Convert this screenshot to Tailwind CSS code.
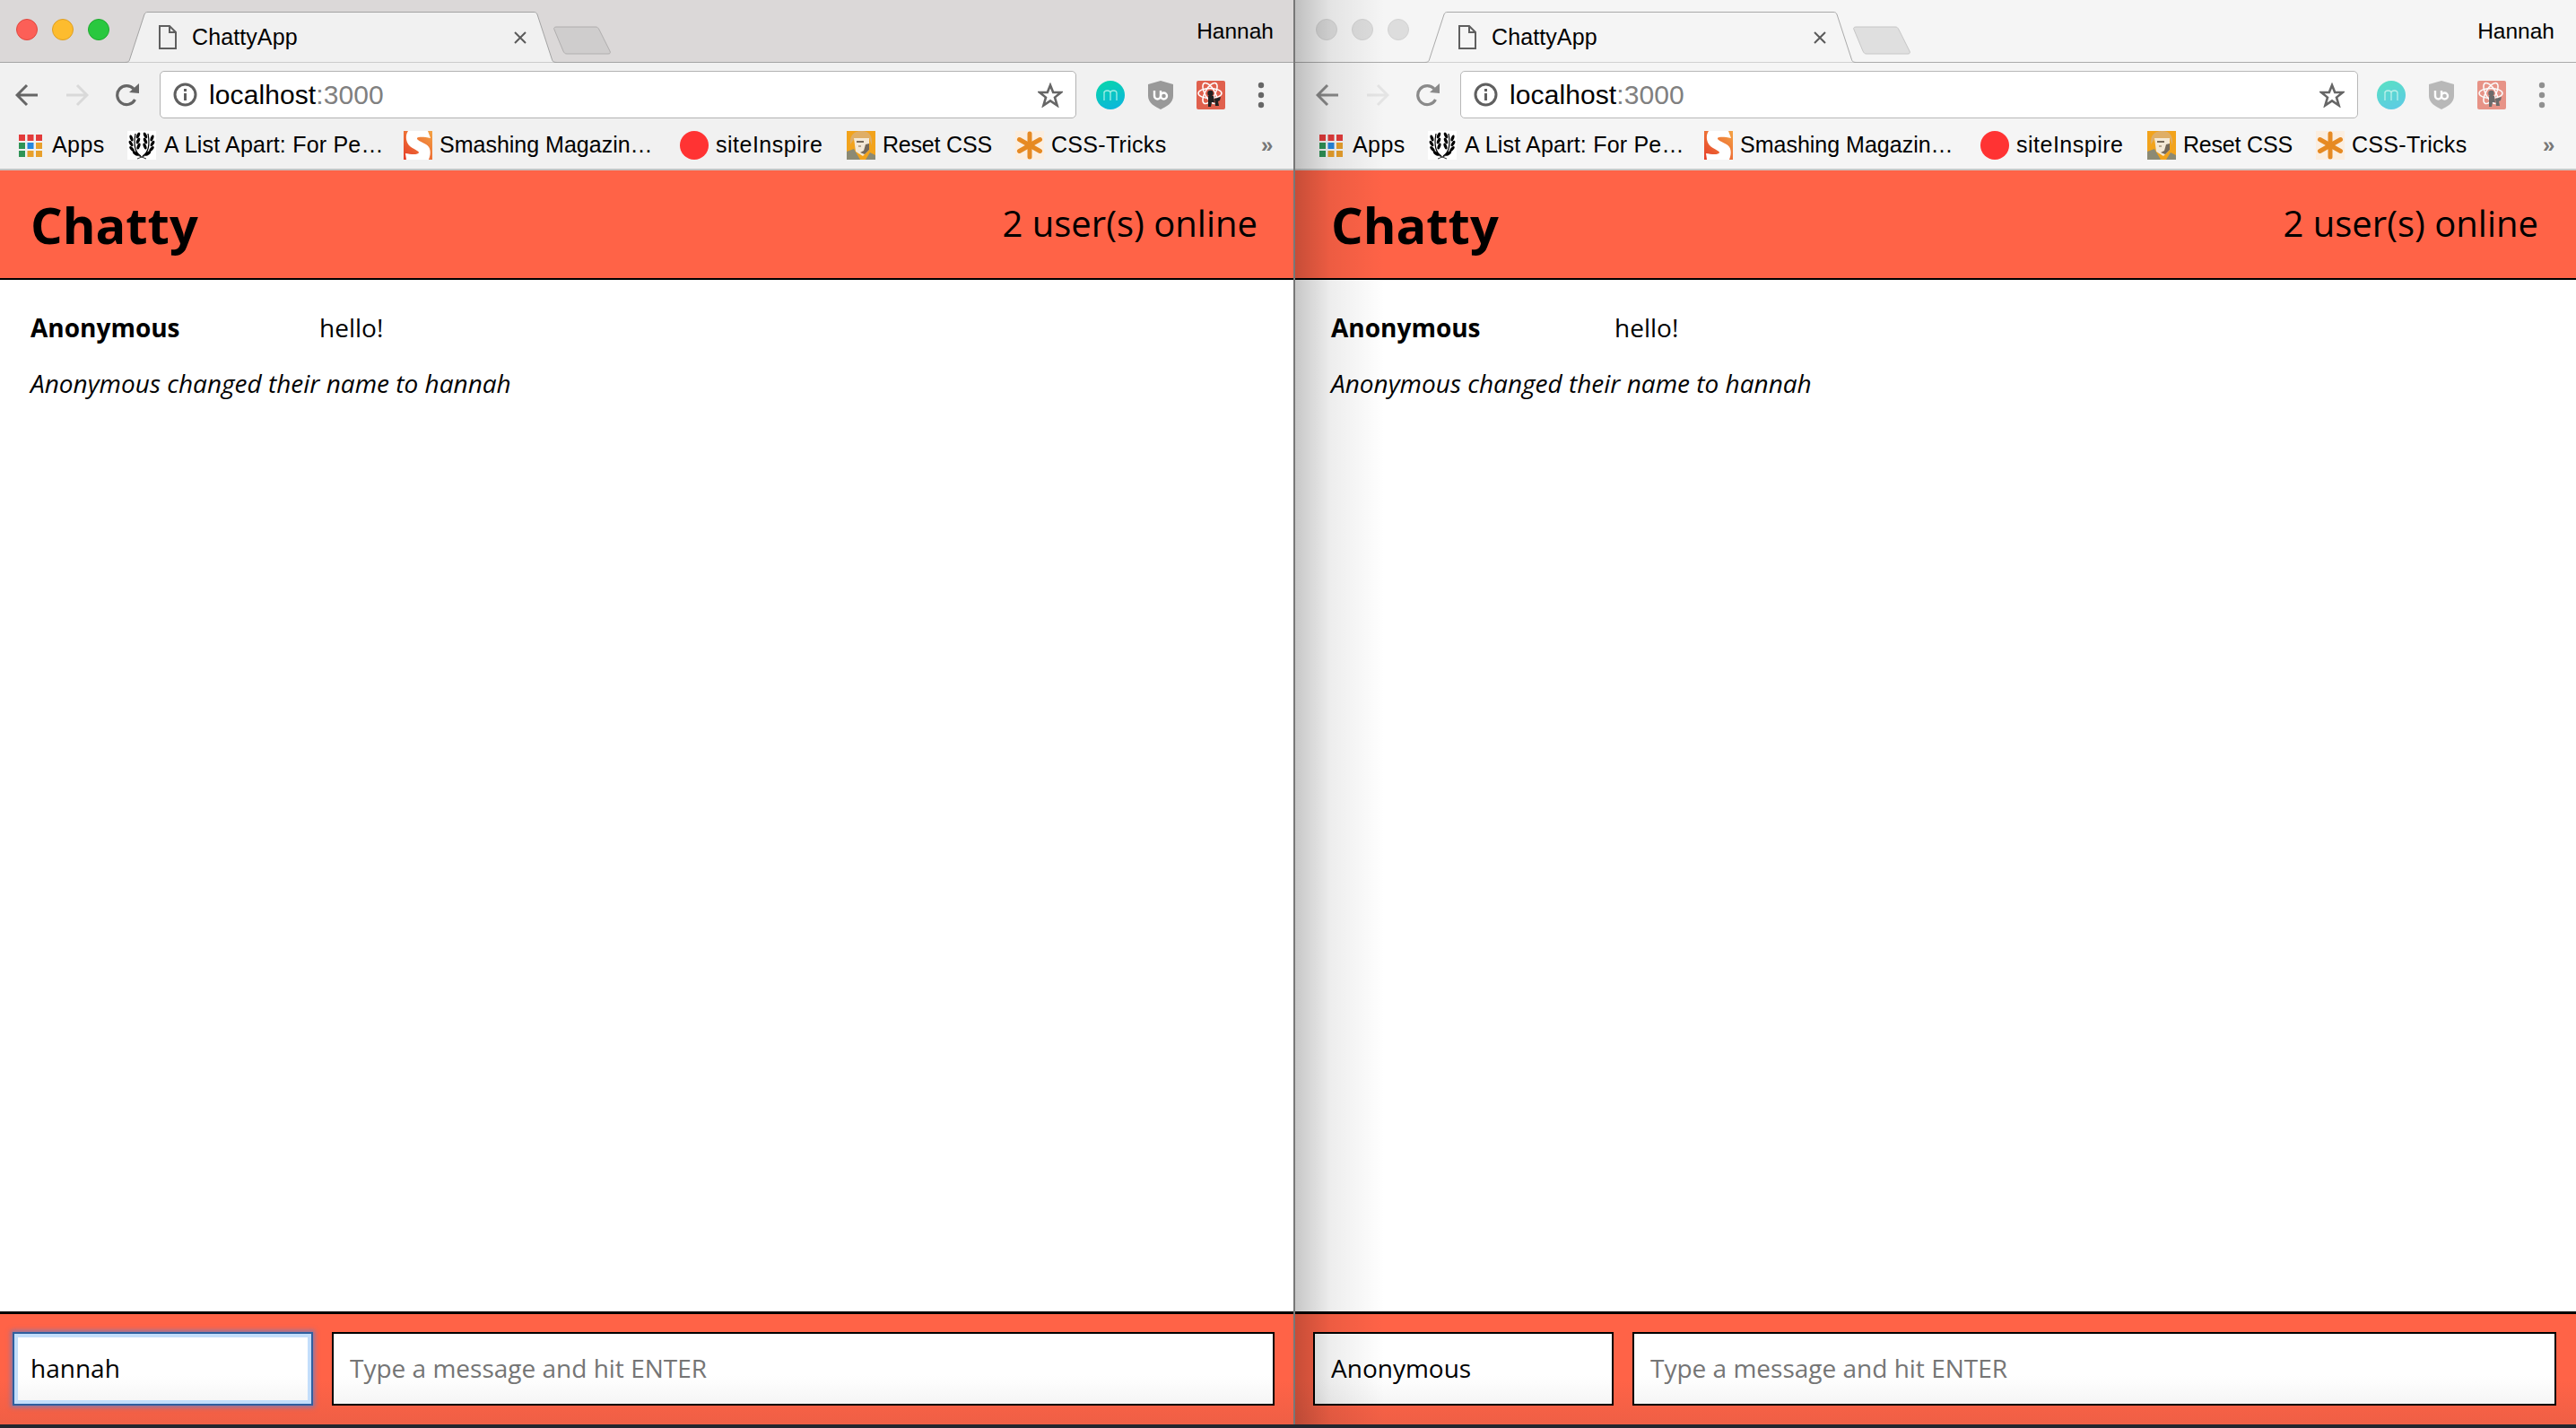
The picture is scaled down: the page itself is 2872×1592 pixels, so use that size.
<!DOCTYPE html>
<html lang="en">
<head>
    <meta charset="UTF-8">
    <title>ChattyApp</title>
    <script src="https://cdn.jsdelivr.net/npm/@tailwindcss/browser@4"></script>
</head>
<body class="w-[2872px] h-[1592px] overflow-hidden bg-[#23262e]">
    <!-- shared toolbar icons -->
    <svg class="absolute w-0 h-0">
        <defs>
            <linearGradient id="smashing" x1="1" y1="0" x2="0" y2="1"><stop offset="0" stop-color="#f4a444"/><stop offset="1" stop-color="#e63c28"/></linearGradient>
            <linearGradient id="mint" x1="0.3" y1="0" x2="0.7" y2="1"><stop offset="0" stop-color="#08d4ad"/><stop offset="1" stop-color="#0cb6dc"/></linearGradient>
        </defs>
        <symbol id="doc" viewBox="0 0 20 27"><path d="M1 1H12L19 8V26H1Z M12 1V8H19" fill="none" stroke="#5f5f5f" stroke-width="2"/></symbol>
        <symbol id="close" viewBox="0 0 14 14"><path d="M1 1L13 13M13 1L1 13" stroke="#5a5a5a" stroke-width="2"/></symbol>
        <symbol id="back" viewBox="0 0 26 26"><path d="M25 13H2M13 2L2 13L13 24" fill="none" stroke="currentColor" stroke-width="3"/></symbol>
        <symbol id="forward" viewBox="0 0 26 26"><path d="M1 13H24M13 2L24 13L13 24" fill="none" stroke="currentColor" stroke-width="3"/></symbol>
        <symbol id="reload" viewBox="0 0 26 26"><path d="M21.5 18A10.5 10.5 0 1 1 20 6" fill="none" stroke="currentColor" stroke-width="3.2"/><path d="M15 10L26 11V0Z" fill="currentColor"/></symbol>
        <symbol id="info" viewBox="0 0 27 27"><circle cx="13.5" cy="13.5" r="11.5" fill="none" stroke="#5f5f5f" stroke-width="3"/><rect x="12" y="12" width="3" height="8" fill="#5f5f5f"/><rect x="12" y="7" width="3" height="3" fill="#5f5f5f"/></symbol>
        <symbol id="star" viewBox="0 0 28 28"><path d="M14 3L17.2 11H26L19 16.6L21.6 25.5L14 20.4L6.4 25.5L9 16.6L2 11H10.8Z" fill="none" stroke="#666" stroke-width="2.6"/></symbol>
        <symbol id="mint-ext" viewBox="0 0 32 32"><circle cx="16" cy="16" r="16" fill="url(#mint)"/><path d="M9 22V12M9 14C9 10 16 10 16 14V22M16 14C16 10 23 10 23 14V22" fill="none" stroke="#9feee6" stroke-width="1.3"/></symbol>
        <symbol id="ublock" viewBox="0 0 28 32"><path d="M14 0L28 4V17C28 25 20 29 14 32C8 29 0 25 0 17V4Z" fill="#999"/><path d="M7 11V17A3.5 3.5 0 0 0 14 17V11M14 17A3.5 3.5 0 1 0 21 17A3.5 3.5 0 1 0 14 17" fill="none" stroke="#fff" stroke-width="2.4"/></symbol>
        <symbol id="react-ext" viewBox="0 0 32 32"><rect width="32" height="32" rx="2" fill="#e0604d"/><g fill="none" stroke="#fff" stroke-width="1.5"><ellipse cx="15" cy="14" rx="13" ry="5.5"/><ellipse cx="15" cy="14" rx="13" ry="5.5" transform="rotate(60 15 14)"/><ellipse cx="15" cy="14" rx="13" ry="5.5" transform="rotate(120 15 14)"/></g><circle cx="15.500" cy="14" r="3.200" fill="#222"/><path d="M13 17H19L20 24H17L16 29H13ZM20 20L27 18L26 22L24 23L25 28L21 28Z" fill="#222"/></symbol>
        <symbol id="dots" viewBox="0 0 16 32"><circle cx="8" cy="5" r="3.2" fill="#666"/><circle cx="8" cy="16" r="3.2" fill="#666"/><circle cx="8" cy="27" r="3.2" fill="#666"/></symbol>
        <symbol id="apps" viewBox="0 0 26 26">
            <rect x="0" y="1" width="7" height="7" fill="#e33b3b"/><rect x="9.500" y="1" width="7" height="7" fill="#e33b3b"/><rect x="19" y="1" width="7" height="7" fill="#e33b3b"/>
            <rect x="0" y="10" width="7" height="7" fill="#2f9457"/><rect x="9.500" y="10" width="7" height="7" fill="#2486e0"/><rect x="19" y="10" width="7" height="7" fill="#e8a02c"/>
            <rect x="0" y="19" width="7" height="7" fill="#2f9457"/><rect x="9.500" y="19" width="7" height="7" fill="#e8a02c"/><rect x="19" y="19" width="7" height="7" fill="#e8a02c"/>
        </symbol>
        <symbol id="laurel-branch" viewBox="0 0 32 32">
            <path d="M15 28C8 24 7 14 9 3" fill="none" stroke="#000" stroke-width="1.2"/>
            <g fill="#000">
                <ellipse cx="4.500" cy="8" rx="1.700" ry="3.600" transform="rotate(-20 4.500 8)"/><ellipse cx="12" cy="5" rx="1.700" ry="3.600" transform="rotate(25 12 5)"/>
                <ellipse cx="4" cy="14" rx="1.700" ry="3.600" transform="rotate(-30 4 14)"/><ellipse cx="12" cy="11" rx="1.700" ry="3.600" transform="rotate(25 12 11)"/>
                <ellipse cx="5" cy="20" rx="1.700" ry="3.600" transform="rotate(-40 5 20)"/><ellipse cx="12.500" cy="17" rx="1.700" ry="3.600" transform="rotate(20 12.500 17)"/>
                <ellipse cx="9" cy="25" rx="1.700" ry="3.600" transform="rotate(-55 9 25)"/>
            </g>
        </symbol>
        <symbol id="laurel" viewBox="0 0 32 32">
            <rect width="32" height="32" fill="#fff"/>
            <use href="#laurel-branch" width="32" height="32"/>
            <use href="#laurel-branch" width="32" height="32" transform="translate(32 0) scale(-1 1)"/>
            <path d="M11 31L21 27M21 31L11 27" stroke="#000" stroke-width="0.800"/>
        </symbol>
        <symbol id="smashing-logo" viewBox="0 0 32 32"><rect width="32" height="32" fill="url(#smashing)"/><path d="M5 0H27L30 8C24 7 17 6 15 8C14 10 20 12 25 15C30 18 31 24 28 32H3L2 25C8 26 16 27 17 24C17 22 10 20 6 16C2 11 2 4 5 0Z" fill="#fff"/></symbol>
        <symbol id="portrait" viewBox="0 0 32 32"><rect width="32" height="32" fill="#f2a31c"/><path d="M4 15C3 3 10 0 17 0C25 0 29 5 28 16L25 8H9Z" fill="#dfae66"/><path d="M8 8H25V21L18 28L10 23Z" fill="#f3e8d6"/><path d="M11 11H19V13H11ZM21 15L25 14V21L20 26L15 24L19 22Z" fill="#75695a"/><path d="M13 16H16V18H13Z" fill="#b9a78d"/><path d="M0 32V23L8 20L15 32ZM32 32V27L26 24L21 32Z" fill="#8b8a74"/></symbol>
        <symbol id="asterisk" viewBox="0 0 32 32"><rect width="32" height="32" fill="#fbeee0"/><g stroke="#e68a23" stroke-width="5" stroke-linecap="round"><path d="M16 3V29"/><path d="M4.500 9.500L27.500 22.500"/><path d="M27.500 9.500L4.500 22.500"/></g></symbol>
    </svg>

    <div class="flex h-[1588px] font-['Open_Sans',sans-serif] text-black">

        <!-- Focused window -->
        <section class="w-[1442px] flex flex-col">
            <div class="h-[70px] flex bg-[#dbd8d8] border-b border-[#a5a5a5] pl-[18px] font-['Liberation_Sans',sans-serif]">
                <div class="flex gap-4 pt-[21px]">
                    <span class="w-6 h-6 rounded-full bg-[#fc5f57] border border-[#e0483f]"></span>
                    <span class="w-6 h-6 rounded-full bg-[#fdbc2e] border border-[#de9f23]"></span>
                    <span class="w-6 h-6 rounded-full bg-[#29c83f] border border-[#1fa92f]"></span>
                </div>
                <div class="relative w-[482px] h-[57px] mt-[13px] ml-[17px] flex items-center pl-[38px] pr-[34px]">
                    <svg class="absolute inset-0" width="482" height="57" viewBox="0 0 482 57"><path d="M0 56.500C5 56.500 5 55 6 52L22 3C23 1 24 .500 26 .500H456C458 .500 459 1 460 3L476 52C477 55 477 56.500 482 56.500" fill="#f1f1f1" stroke="#a3a3a3"/></svg>
                    <svg class="relative w-5 h-[27px]"><use href="#doc"/></svg>
                    <span class="relative ml-[17px] text-[25px] tracking-[0.1px]">ChattyApp</span>
                    <svg class="relative ml-auto w-[14px] h-[14px]"><use href="#close"/></svg>
                </div>
                <svg class="mt-[29px] -ml-[5px]" width="66" height="33" viewBox="0 0 66 33"><path d="M5 1H48C50 1 51 2 52 4L64 28C65 30 64 31 62 31H16C14 31 13 30 12 28L2 4C1 2 2 1 5 1Z" fill="#cfcdcd" stroke="#b0aeae"/></svg>
                <span class="ml-auto mr-[22px] mt-[20px] text-[24.5px] leading-[30px]">Hannah</span>
            </div>

            <div class="h-[65px] flex items-center pl-[17px] pr-[28px] bg-[#f1f1f1] pt-[6px]">
                <svg class="w-[26px] h-[26px] text-[#666]"><use href="#back"/></svg>
                <svg class="w-[26px] h-[26px] ml-[30px] text-[#d9d9d9]"><use href="#forward"/></svg>
                <svg class="w-[26px] h-[26px] ml-[30px] text-[#666]"><use href="#reload"/></svg>
                <div class="flex-1 h-[53px] ml-[23px] flex items-center pl-[14px] pr-[14px] bg-white border border-[#b3b3b3] rounded-[5px] font-['Liberation_Sans',sans-serif]">
                    <svg class="w-[27px] h-[27px]"><use href="#info"/></svg>
                    <span class="ml-[13px] text-[30px] tracking-[0.1px]">localhost<span class="text-[#808080]">:3000</span></span>
                    <svg class="ml-auto w-7 h-7"><use href="#star"/></svg>
                </div>
                <svg class="w-8 h-8 ml-[22px]"><use href="#mint-ext"/></svg>
                <svg class="w-7 h-8 ml-[26px]"><use href="#ublock"/></svg>
                <svg class="w-8 h-8 ml-[26px]"><use href="#react-ext"/></svg>
                <svg class="w-4 h-8 ml-[32px]"><use href="#dots"/></svg>
            </div>

            <div class="h-[55px] flex items-center pl-[21px] bg-[#f1f1f1] border-b-2 border-[#c4c4c4] text-[25px] whitespace-nowrap font-['Liberation_Sans',sans-serif]">
                <svg class="w-[26px] h-[26px]"><use href="#apps"/></svg>
                <span class="ml-[11px] w-[59px] tracking-[0.4px]">Apps</span>
                <svg class="w-8 h-8 ml-[25px]"><use href="#laurel"/></svg>
                <span class="ml-[9px] w-[245px] tracking-[0.2px]">A List Apart: For Pe…</span>
                <svg class="w-8 h-8 ml-[22px]"><use href="#smashing-logo"/></svg>
                <span class="ml-[8px] w-[238px]">Smashing Magazin…</span>
                <span class="w-8 h-8 ml-[30px] rounded-full bg-[#ff3333]"></span>
                <span class="ml-[8px] w-[120px] tracking-[0.5px]">siteInspire</span>
                <svg class="w-8 h-8 ml-[26px]"><use href="#portrait"/></svg>
                <span class="ml-[8px] w-[121px] tracking-[-0.2px]">Reset CSS</span>
                <svg class="w-8 h-8 ml-[27px]"><use href="#asterisk"/></svg>
                <span class="ml-[8px] w-[128px] tracking-[0.3px]">CSS-Tricks</span>
                <span class="ml-[106px] text-[24px] font-bold text-[#777]">»</span>
            </div>

            <header class="h-[122px] flex items-center justify-between pl-[34px] pr-[40px] bg-[#ff6347] border-b-2 border-black">
                <h1 class="text-[56px] font-bold leading-none">Chatty</h1>
                <span class="text-[40px] leading-none -mt-[2px]">2 user(s) online</span>
            </header>

            <main class="flex-1 bg-white pt-[33px] pl-[34px] text-[28px] leading-[40px]">
                <div class="flex">
                    <span class="w-[322px] font-bold">Anonymous</span>
                    <span>hello!</span>
                </div>
                <p class="mt-[22px] italic">Anonymous changed their name to hannah</p>
            </main>

            <footer class="h-[126px] flex gap-[21px] pl-[14px] pr-[21px] pt-[20px] bg-linear-to-b from-[#ff6347] from-60% to-[#ef5f45] border-t-[3px] border-black">
                <input type="text" value="hannah" class="w-[335px] h-[82px] px-[18px] pb-[2px] text-[28px] bg-linear-to-b from-white from-60% to-[#f5f5f5] border-2 border-[#2f5f9f] shadow-[inset_0_0_0_4px_#c3defb,0_0_5px_2px_rgba(90,130,210,0.7)] outline-none">
                <input type="text" placeholder="Type a message and hit ENTER" class="flex-1 h-[82px] px-[18px] pb-[2px] text-[28px] bg-linear-to-b from-white from-60% to-[#f5f5f5] border-2 border-black outline-none placeholder:text-[#757575]">
            </footer>
        </section>

        <div class="w-[2px] bg-[#777]"></div>

        <!-- Unfocused window -->
        <section class="relative flex-1 flex flex-col">
            <div class="absolute inset-y-0 left-0 w-[100px] z-10 pointer-events-none bg-linear-to-r from-black/22 via-black/7 via-40% to-transparent"></div>

            <div class="h-[70px] flex bg-[#f5f5f5] border-b border-[#aaaaaa] pl-[23px] font-['Liberation_Sans',sans-serif]">
                <div class="flex gap-4 pt-[21px]">
                    <span class="w-6 h-6 rounded-full bg-[#dddddd] border border-[#d2d2d2]"></span>
                    <span class="w-6 h-6 rounded-full bg-[#dddddd] border border-[#d2d2d2]"></span>
                    <span class="w-6 h-6 rounded-full bg-[#dddddd] border border-[#d2d2d2]"></span>
                </div>
                <div class="relative w-[482px] h-[57px] mt-[13px] ml-[17px] flex items-center pl-[38px] pr-[34px]">
                    <svg class="absolute inset-0" width="482" height="57" viewBox="0 0 482 57"><path d="M0 56.500C5 56.500 5 55 6 52L22 3C23 1 24 .500 26 .500H456C458 .500 459 1 460 3L476 52C477 55 477 56.500 482 56.500" fill="#f5f5f5" stroke="#aaaaaa"/></svg>
                    <svg class="relative w-5 h-[27px]"><use href="#doc"/></svg>
                    <span class="relative ml-[17px] text-[25px] tracking-[0.1px]">ChattyApp</span>
                    <svg class="relative ml-auto w-[14px] h-[14px]"><use href="#close"/></svg>
                </div>
                <svg class="mt-[29px] -ml-[5px]" width="66" height="33" viewBox="0 0 66 33"><path d="M5 1H48C50 1 51 2 52 4L64 28C65 30 64 31 62 31H16C14 31 13 30 12 28L2 4C1 2 2 1 5 1Z" fill="#dfdfdf" stroke="#c6c6c6"/></svg>
                <span class="ml-auto mr-[24px] mt-[20px] text-[24.5px] leading-[30px]">Hannah</span>
            </div>

            <div class="h-[65px] flex items-center pl-[23px] pr-[30px] bg-[#f5f5f5] pt-[6px]">
                <svg class="w-[26px] h-[26px] text-[#8a8a8a]"><use href="#back"/></svg>
                <svg class="w-[26px] h-[26px] ml-[30px] text-[#e4e4e4]"><use href="#forward"/></svg>
                <svg class="w-[26px] h-[26px] ml-[30px] text-[#8a8a8a]"><use href="#reload"/></svg>
                <div class="flex-1 h-[53px] ml-[23px] flex items-center pl-[14px] pr-[14px] bg-white border border-[#b8b8b8] rounded-[5px] font-['Liberation_Sans',sans-serif]">
                    <svg class="w-[27px] h-[27px]"><use href="#info"/></svg>
                    <span class="ml-[13px] text-[30px] tracking-[0.1px]">localhost<span class="text-[#808080]">:3000</span></span>
                    <svg class="ml-auto w-7 h-7"><use href="#star"/></svg>
                </div>
                <svg class="w-8 h-8 ml-[21px] opacity-65"><use href="#mint-ext"/></svg>
                <svg class="w-7 h-8 ml-[26px] opacity-65"><use href="#ublock"/></svg>
                <svg class="w-8 h-8 ml-[26px] opacity-65"><use href="#react-ext"/></svg>
                <svg class="w-4 h-8 ml-[32px] opacity-70"><use href="#dots"/></svg>
            </div>

            <div class="h-[55px] flex items-center pl-[27px] bg-[#f5f5f5] border-b-2 border-[#c8c8c8] text-[25px] whitespace-nowrap font-['Liberation_Sans',sans-serif]">
                <svg class="w-[26px] h-[26px]"><use href="#apps"/></svg>
                <span class="ml-[11px] w-[59px] tracking-[0.4px]">Apps</span>
                <svg class="w-8 h-8 ml-[25px]"><use href="#laurel"/></svg>
                <span class="ml-[9px] w-[245px] tracking-[0.2px]">A List Apart: For Pe…</span>
                <svg class="w-8 h-8 ml-[22px]"><use href="#smashing-logo"/></svg>
                <span class="ml-[8px] w-[238px]">Smashing Magazin…</span>
                <span class="w-8 h-8 ml-[30px] rounded-full bg-[#ff3333]"></span>
                <span class="ml-[8px] w-[120px] tracking-[0.5px]">siteInspire</span>
                <svg class="w-8 h-8 ml-[26px]"><use href="#portrait"/></svg>
                <span class="ml-[8px] w-[121px] tracking-[-0.2px]">Reset CSS</span>
                <svg class="w-8 h-8 ml-[27px]"><use href="#asterisk"/></svg>
                <span class="ml-[8px] w-[128px] tracking-[0.3px]">CSS-Tricks</span>
                <span class="ml-[85px] text-[24px] font-bold text-[#777]">»</span>
            </div>

            <header class="h-[122px] flex items-center justify-between pl-[40px] pr-[42px] bg-[#ff6347] border-b-2 border-black">
                <h1 class="text-[56px] font-bold leading-none">Chatty</h1>
                <span class="text-[40px] leading-none -mt-[2px]">2 user(s) online</span>
            </header>

            <main class="flex-1 bg-white pt-[33px] pl-[40px] text-[28px] leading-[40px]">
                <div class="flex">
                    <span class="w-[316px] font-bold">Anonymous</span>
                    <span>hello!</span>
                </div>
                <p class="mt-[22px] italic">Anonymous changed their name to hannah</p>
            </main>

            <footer class="h-[126px] flex gap-[21px] pl-[20px] pr-[22px] pt-[20px] bg-linear-to-b from-[#ff6347] from-60% to-[#ef5f45] border-t-[3px] border-black">
                <input type="text" value="Anonymous" class="w-[335px] h-[82px] px-[18px] pb-[2px] text-[28px] bg-linear-to-b from-white from-60% to-[#f5f5f5] border-2 border-black outline-none">
                <input type="text" placeholder="Type a message and hit ENTER" class="flex-1 h-[82px] px-[18px] pb-[2px] text-[28px] bg-linear-to-b from-white from-60% to-[#f5f5f5] border-2 border-black outline-none placeholder:text-[#757575]">
            </footer>
        </section>
    </div>
</body>
</html>
